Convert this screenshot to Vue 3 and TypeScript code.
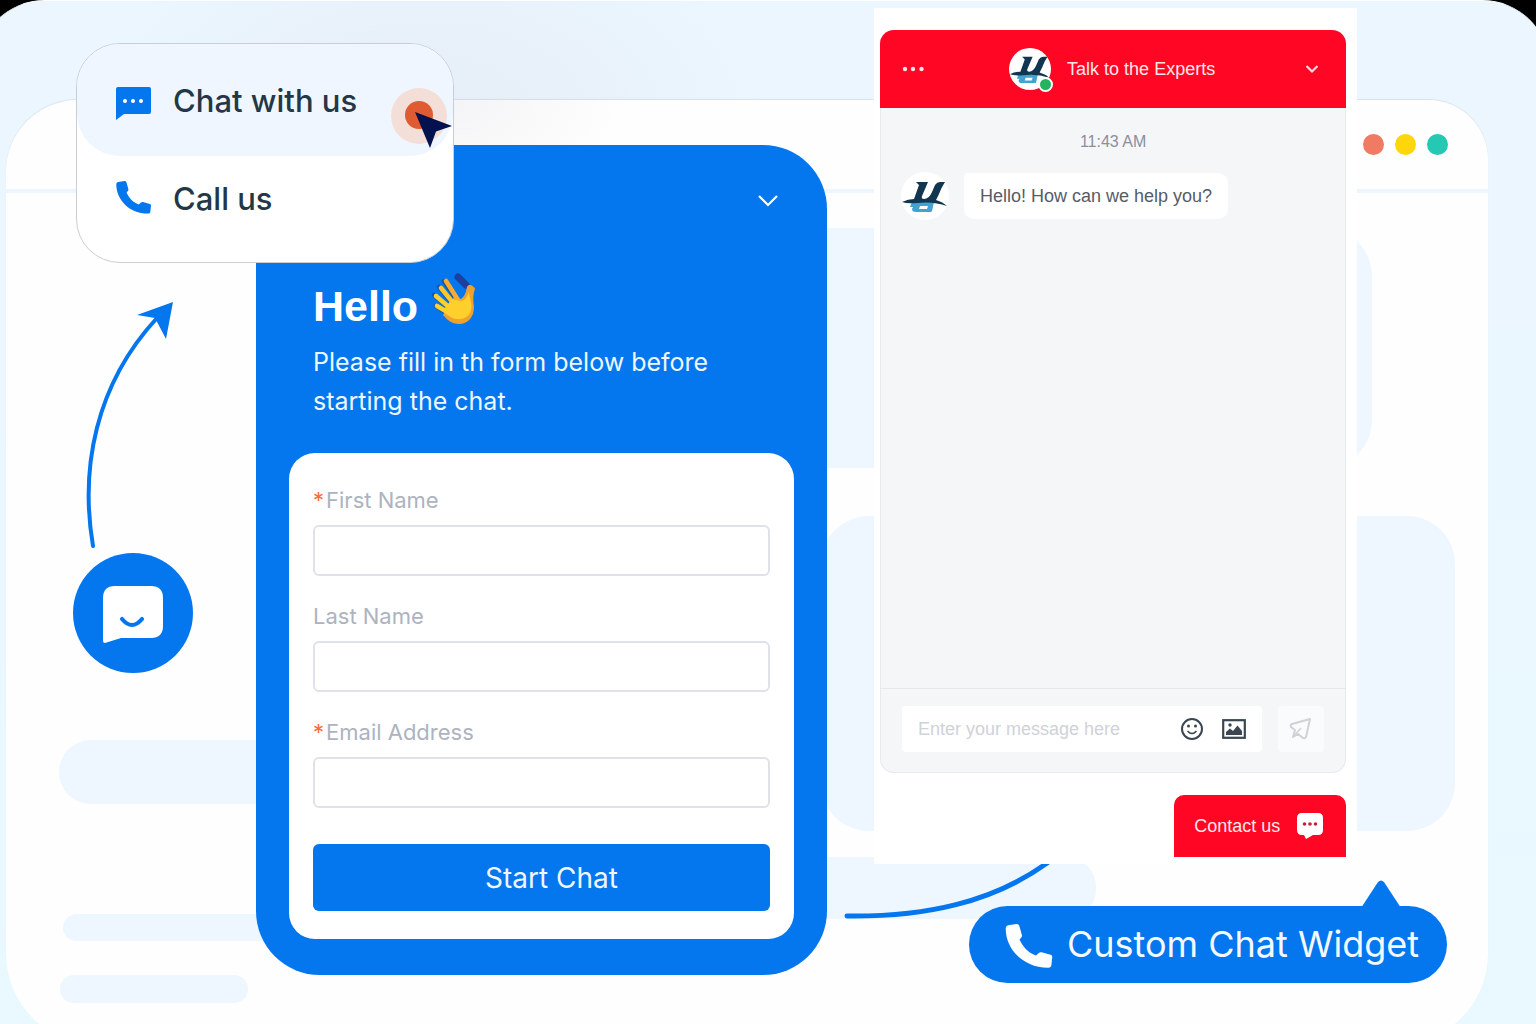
<script setup lang="ts">
import { reactive, ref } from 'vue'

interface Field {
  id: string
  label: string
  required: boolean
  type: string
}

const fields: Field[] = [
  { id: 'first-name', label: 'First Name', required: true, type: 'text' },
  { id: 'last-name', label: 'Last Name', required: false, type: 'text' },
  { id: 'email', label: 'Email Address', required: true, type: 'email' },
]

const values = reactive<Record<string, string>>({ 'first-name': '', 'last-name': '', email: '' })
const message = ref('')

const phonePath =
  'M2 1L8.5 0Q10 0 10.4 1.2L12.4 8.3Q12.6 9.4 11.8 10L10.6 11.8C13.500 17.5 17 21.5 22.8 23.500L25 21.6Q25.8 20.8 27 21.1L33.8 23Q35 23.4 35 24.6L34.3 31Q34 32.6 32.5 32.6C14 33 0 19 .3 3Q.3 1.4 2 1Z'

const logo = {
  base: 'M11 30H33L31 39Q31 40 29 40H15Q11 40 11 37L12 35H9Z',
  hole: 'M19 34H27L26 37H18Z',
  wing: 'M15 10H27L21 24Q20 27 23 27Q28 27 31 20L34 13Q36 10 39 10H44Q40 16 38 22L35 28Q42 30 46 34Q32 29 16 31Q6 32 1 30Q7 27 13 27L18 13Z',
}
</script>

<template>
  <main class="scene">
    <div class="backdrop" aria-hidden="true"></div>
    <div class="window" aria-hidden="true">
      <div class="titlebar">
        <i class="dot coral"></i>
        <i class="dot yellow"></i>
        <i class="dot teal"></i>
      </div>
      <i class="block block-a"></i>
      <i class="block block-b"></i>
      <i class="block block-c"></i>
      <i class="block block-d"></i>
      <i class="block block-e"></i>
      <i class="block block-f"></i>
    </div>

    <div class="columns">
      <aside class="rail">
        <svg class="arrow" width="90" height="250" viewBox="0 0 90 250" aria-hidden="true">
          <path d="M8 245C-5 168 10 84 72 17" fill="none" stroke="#0476ee" stroke-width="4" stroke-linecap="round" />
          <path d="M88 1L52 14L70 17L81 38Z" fill="#0476ee" />
        </svg>
        <button class="launcher" type="button" aria-label="Open chat">
          <svg width="120" height="120" viewBox="0 0 120 120">
            <path d="M42 33H78Q90 33 90 45V73Q90 85 78 85H48L32 90Q30 90 30 88V45Q30 33 42 33Z" fill="#fff" />
            <path d="M49 66Q59 78 69 66" fill="none" stroke="#0476ee" stroke-width="4.2" stroke-linecap="round" />
          </svg>
        </button>
      </aside>

      <section class="prechat">
        <button class="collapse" type="button" aria-label="Minimise form">
          <svg width="22" height="14" viewBox="0 0 22 14">
            <path d="M2 2L11 11L20 2" fill="none" stroke="#fff" stroke-width="2.2" />
          </svg>
        </button>
        <h1>
          Hello
          <svg class="wave" width="44" height="54" viewBox="0 0 44 54" aria-hidden="true">
            <path d="M26 5L34 13" stroke="#1d3f9e" stroke-width="7" stroke-linecap="round" />
            <g fill="none" stroke="#1554ad" stroke-width="4.500" stroke-linecap="round">
              <path d="M12 9L25 28M7 15L20 31M2 23L17 36M4 34L15 41" />
            </g>
            <path d="M35 15C37 11 42 14 43 17C41 22 41 27 42 35C42 45 36 52 27 52C21 52 16 49 11 43L22 25L29 27C33 24 34 20 35 15Z" fill="#efa12f" />
            <g fill="none" stroke-width="4.600" stroke-linecap="round">
              <path d="M14 9L26 28" stroke="#fbab2c" />
              <path d="M9 16L22 32" stroke="#ffc62d" />
              <path d="M4 24L18 36" stroke="#ffd02e" />
              <path d="M5 34L17 41" stroke="#ffd02e" />
            </g>
            <path d="M20 27L28 29C33 29 35 25 37 20C37 27 41 31 39 38C38 44 32 48 24 47C18 46 14 42 12 37Z" fill="#ffd02b" />
          </svg>
        </h1>
        <p>Please fill in th form below before<br />starting the chat.</p>

        <form class="card" @submit.prevent>
          <div v-for="field in fields" :key="field.id" class="field">
            <label :for="field.id"><span v-if="field.required" class="star">*</span>{{ field.label }}</label>
            <input :id="field.id" v-model="values[field.id]" :type="field.type" />
          </div>
          <button class="start" type="submit">Start Chat</button>
        </form>
      </section>

      <section class="live">
        <svg class="swoosh" width="206" height="58" viewBox="0 0 206 58" aria-hidden="true">
          <path d="M3 53C80 54 149 40 206 -2" fill="none" stroke="#0476ee" stroke-width="5" stroke-linecap="round" />
        </svg>

        <div class="widget">
          <article class="chat">
            <header>
              <button class="plain" type="button" aria-label="More options">
                <svg width="24" height="8" viewBox="0 0 24 8" fill="#ffe3e6">
                  <circle cx="4" cy="4" r="2.2" /><circle cx="12" cy="4" r="2.2" /><circle cx="20.500" cy="4" r="2.200" />
                </svg>
              </button>
              <div class="who">
                <span class="avatar small">
                  <svg viewBox="0 0 48 48">
                    <path :d="logo.base" fill="#41a3d1" />
                    <path :d="logo.hole" fill="#fff" />
                    <path :d="logo.wing" fill="#12364f" />
                  </svg>
                  <i class="online"></i>
                </span>
                <span class="name">Talk to the Experts</span>
              </div>
              <button class="plain" type="button" aria-label="Minimise chat">
                <svg width="14" height="10" viewBox="0 0 14 10">
                  <path d="M1.500 2L7 7.500L12.500 2" fill="none" stroke="#ffd9de" stroke-width="2.200" />
                </svg>
              </button>
            </header>

            <div class="log">
              <time>11:43 AM</time>
              <div class="message">
                <span class="avatar">
                  <svg viewBox="0 0 48 48">
                    <path :d="logo.base" fill="#41a3d1" />
                    <path :d="logo.hole" fill="#fff" />
                    <path :d="logo.wing" fill="#12364f" />
                  </svg>
                </span>
                <p class="bubble">Hello! How can we help you?</p>
              </div>
            </div>

            <footer>
              <div class="composer">
                <input v-model="message" type="text" aria-label="Message" placeholder="Enter your message here" />
                <button class="plain" type="button" aria-label="Add emoji">
                  <svg width="24" height="24" viewBox="0 0 24 24" fill="none" stroke="#3b4650">
                    <circle cx="12" cy="12" r="10" stroke-width="2" />
                    <path d="M7.500 14Q12 19 16.500 14" stroke-width="1.700" />
                    <g fill="#3b4650" stroke="none"><circle cx="8.500" cy="9" r="1.500" /><circle cx="15.500" cy="9" r="1.500" /></g>
                  </svg>
                </button>
                <button class="plain" type="button" aria-label="Add image">
                  <svg width="24" height="20" viewBox="0 0 24 20">
                    <rect x="1.200" y="1.200" width="21.600" height="17.600" fill="#fff" stroke="#3b4650" stroke-width="2.200" />
                    <path d="M4 16V13L8 9.500L11 12L15.500 6.500L20 12V16Z" fill="#3b4650" />
                    <circle cx="8" cy="6" r="1.700" fill="#3b4650" />
                  </svg>
                </button>
              </div>
              <button class="send" type="button" aria-label="Send">
                <svg width="24" height="24" viewBox="0 0 24 24" fill="none" stroke="#d0d2d8" stroke-width="2" stroke-linejoin="round">
                  <path d="M21 2L3 7Q1 8 2 10L6 13L4 20L9 17L14 21Q16 22 17 20Z" />
                  <path d="M5 19L12 11" stroke-width="1.500" />
                </svg>
              </button>
            </footer>
          </article>

          <button class="contact" type="button">
            Contact us
            <svg width="28" height="28" viewBox="0 0 28 28">
              <path d="M6 1H22Q27 1 27 6V18Q27 23 22 23H17L10 27L8 23H6Q1 23 1 18V6Q1 1 6 1Z" fill="#fff" />
              <g fill="#c4203a"><circle cx="8.500" cy="12" r="1.800" /><circle cx="14" cy="12" r="1.800" /><circle cx="19.500" cy="12" r="1.800" /></g>
            </svg>
          </button>
        </div>

        <div class="tag">
          <svg class="pointer" width="40" height="28" viewBox="0 0 40 28" aria-hidden="true">
            <path d="M0 28L17 2Q20 -1 23 2L40 28Z" fill="#0476ee" />
          </svg>
          <svg width="48" height="48" viewBox="0 -3 35.300 35.800" aria-hidden="true"><path :d="phonePath" fill="#fff" /></svg>
          <span>Custom Chat Widget</span>
        </div>
      </section>
    </div>

    <nav class="menu" aria-label="Contact options">
      <button class="option active" type="button">
        <svg width="36" height="40" viewBox="-1 -7 36 40">
          <path d="M2 0H33Q35 0 35 2V25Q35 27 33 27H8L0 33V2Q0 0 2 0Z" fill="#0476ee" />
          <g fill="#fff"><circle cx="9" cy="14" r="2" /><circle cx="17" cy="14" r="2" /><circle cx="25" cy="14" r="2" /></g>
        </svg>
        Chat with us
      </button>
      <button class="option" type="button">
        <svg width="36" height="34" viewBox="-1 0 36 34"><path :d="phonePath" fill="#0476ee" /></svg>
        Call us
      </button>
      <svg class="cursor" width="64" height="64" viewBox="0 0 64 64" aria-hidden="true">
        <circle cx="29" cy="32" r="28" fill="#f3dfd8" />
        <circle cx="29" cy="31" r="14" fill="#e05b31" />
        <path d="M25 28L62 42L46 47.500L40 64Z" fill="#04114f" />
      </svg>
    </nav>
  </main>
</template>

<style>
body {
  margin: 0;
  background: #000;
}
</style>

<style scoped>
* {
  box-sizing: border-box;
}

button {
  border: 0;
  padding: 0;
  background: none;
  cursor: pointer;
}

svg {
  display: block;
  flex: none;
}

.scene {
  position: relative;
  min-height: 100vh;
  overflow: hidden;
  background: #000;
  font-family: Inter, "Liberation Sans", sans-serif;
}

.backdrop {
  position: absolute;
  inset: 0 -14px -80px -23px;
  border-radius: 68px;
  border-top: 1px solid #fff;
  background:
    radial-gradient(ellipse 340px 190px at 450px 110px, rgba(226, 231, 240, 0.6), rgba(226, 231, 240, 0)),
    linear-gradient(180deg, #ebf6ff 0%, #ebf7ff 40%, #e8f9ff 100%);
}

.window {
  position: absolute;
  inset: 100px 48px -20px 6px;
  border-radius: 72px 60px 90px 90px;
  background: radial-gradient(ellipse 180px 110px at 440px 0, #f4f4f6, #fefefe);
  box-shadow: 0 -1px 1px rgba(80, 90, 110, 0.12);
}

.titlebar {
  display: flex;
  justify-content: flex-end;
  align-items: center;
  gap: 11px;
  height: 93px;
  padding-right: 40px;
  border-bottom: 4px solid #edf6ff;
}

.dot {
  width: 21px;
  height: 21px;
  border-radius: 50%;
}

.coral { background: #f07a63; }
.yellow { background: #ffd60a; }
.teal { background: #25c8b3; }

.block {
  position: absolute;
  background: #eef6ff;
}

.block-a { left: 52%; right: 116px; top: 128px; height: 240px; border-radius: 48px; }
.block-b { left: 55%; right: 33px; top: 416px; height: 315px; border-radius: 48px; }
.block-c { left: 52%; right: 392px; top: 757px; height: 62px; border-radius: 30px; }
.block-d { left: 53px; width: 320px; top: 640px; height: 64px; border-radius: 32px; }
.block-e { left: 57px; width: 320px; top: 814px; height: 27px; border-radius: 14px; }
.block-f { left: 54px; width: 188px; top: 875px; height: 28px; border-radius: 14px; }

.columns {
  position: relative;
  display: grid;
  grid-template-columns: 256fr 571fr 47fr 662fr;
  align-items: start;
}

.rail {
  padding: 301px 0 0 73px;
}

.arrow {
  margin-left: 12px;
}

.launcher {
  display: block;
  margin-top: 2px;
  border-radius: 50%;
  background: #0476ee;
}

.prechat {
  position: relative;
  margin-top: 145px;
  padding: 137px 33px 36px;
  border-radius: 64px;
  background: #0476ee;
  color: #fff;
}

.collapse {
  position: absolute;
  top: 49px;
  right: 48px;
}

h1 {
  display: flex;
  align-items: center;
  gap: 14px;
  height: 48px;
  margin: 0 0 13px 24px;
  font: bold 43px/48px "Liberation Sans", Arial, sans-serif;
}

.wave {
  margin-top: -14px;
}

.prechat p {
  margin: 0 0 32px 24px;
  font-size: 25px;
  line-height: 39px;
  color: #eef6ff;
}

.card {
  padding: 31px 24px 28px;
  border-radius: 26px;
  background: #fff;
}

.field {
  display: flex;
  flex-direction: column;
  gap: 9px;
  margin-bottom: 24px;
}

.field label {
  height: 32px;
  font-size: 22px;
  line-height: 32px;
  color: #adb3bf;
}

.star {
  margin-right: 2px;
  color: #ff6a3d;
}

.field input {
  height: 51px;
  padding: 0 14px;
  border: 2px solid #dfe2e8;
  border-radius: 6px;
  background: #fff;
  font: 22px Inter, sans-serif;
  color: #243746;
}

.start {
  width: 100%;
  height: 67px;
  margin-top: 12px;
  padding-left: 20px;
  border-radius: 6px;
  background: #0476ee;
  font: 28px Inter, sans-serif;
  color: #eef6ff;
}

.live {
  position: relative;
  grid-column: 4;
}

.swoosh {
  position: absolute;
  top: 863px;
  left: -30px;
}

.widget {
  position: relative;
  width: 73%;
  margin-top: 8px;
  padding: 22px 11px 7px 6px;
  background: #fff;
  font-family: "Liberation Sans", Arial, sans-serif;
}

.chat {
  overflow: hidden;
  border-radius: 14px;
  background: #f5f6f8;
  box-shadow: inset 0 0 0 1px #e8eaed;
}

.chat header {
  display: flex;
  align-items: center;
  justify-content: space-between;
  height: 78px;
  padding: 0 27px 0 21px;
  background: #ff0624;
}

.who {
  display: flex;
  align-items: center;
  gap: 16px;
  padding-right: 6px;
}

.avatar {
  position: relative;
  width: 48px;
  height: 48px;
  border-radius: 50%;
  background: #fff;
}

.avatar.small {
  width: 42px;
  height: 42px;
}

.online {
  position: absolute;
  right: -2px;
  bottom: -2px;
  width: 15px;
  height: 15px;
  border: 2px solid #fff;
  border-radius: 50%;
  background: #24b35f;
}

.name {
  font-size: 18px;
  color: #ffe6e9;
}

.log {
  height: 580px;
  padding: 22px 21px;
}

time {
  display: block;
  font-size: 16px;
  line-height: 24px;
  text-align: center;
  color: #8a8f9b;
}

.message {
  display: flex;
  align-items: center;
  gap: 15px;
  margin-top: 18px;
}

.bubble {
  margin: 0;
  padding: 0 16px;
  border-radius: 4px 10px 10px 10px;
  background: #fff;
  font-size: 18px;
  line-height: 46px;
  color: #555c66;
}

.chat footer {
  display: flex;
  gap: 16px;
  height: 85px;
  padding: 17px 22px 0;
  border-top: 1px solid #e6e8eb;
}

.composer {
  display: flex;
  flex: 1;
  align-items: center;
  gap: 18px;
  height: 46px;
  padding: 0 16px;
  border-radius: 4px;
  background: #fff;
}

.composer input {
  flex: 1;
  min-width: 0;
  padding: 0;
  border: 0;
  outline: 0;
  background: none;
  font: 18px "Liberation Sans", Arial, sans-serif;
  color: #3b4650;
}

.composer input::placeholder {
  color: #cfd2d8;
  opacity: 1;
}

.send {
  display: grid;
  place-items: center;
  width: 46px;
  height: 46px;
  border-radius: 4px;
  background: #fafbfc;
}

.contact {
  display: flex;
  align-items: center;
  justify-content: space-between;
  width: 172px;
  height: 62px;
  margin: 22px 0 0 auto;
  padding: 0 22px 0 20px;
  border-radius: 10px 10px 0 0;
  background: #ff0624;
  font: 18px "Liberation Sans", Arial, sans-serif;
  color: #ffe6e9;
}

.tag {
  position: relative;
  display: flex;
  align-items: center;
  gap: 14px;
  width: 478px;
  height: 77px;
  margin: 42px 0 0 95px;
  padding: 0 0 2px 36px;
  border-radius: 39px;
  background: #0476ee;
  font-size: 36px;
  color: #f4f9ff;
  white-space: nowrap;
}

.pointer {
  position: absolute;
  top: -26px;
  right: 46px;
}

.menu {
  position: absolute;
  top: 43px;
  left: 76px;
  width: 378px;
  height: 220px;
  border: 1px solid #c9ced6;
  border-radius: 44px;
  background: #fff;
}

.option {
  display: flex;
  align-items: center;
  gap: 22px;
  width: 100%;
  height: 84px;
  padding-left: 38px;
  font: 500 31px Inter, sans-serif;
  color: #243746;
}

.option.active {
  height: 112px;
  border-radius: 43px;
  background: #eff6ff;
}

.cursor {
  position: absolute;
  top: 40px;
  right: -1px;
}
</style>
